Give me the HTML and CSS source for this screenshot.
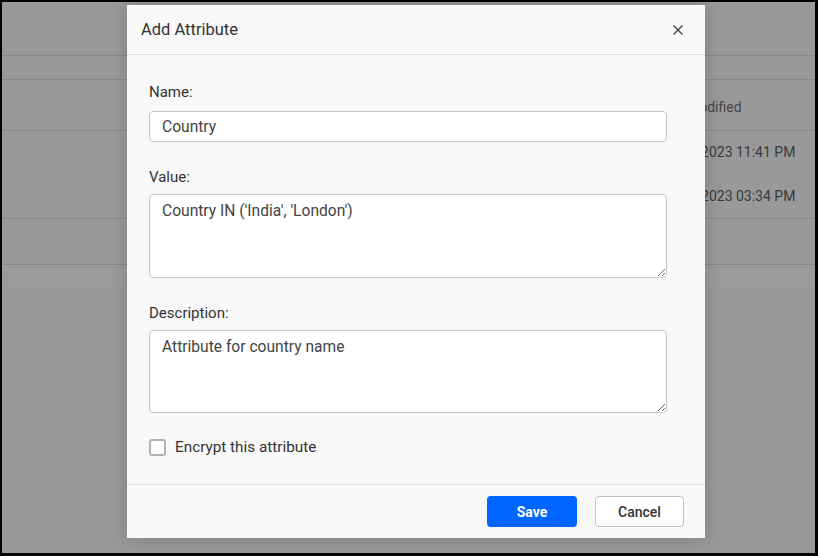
FILE: index.html
```html
<!DOCTYPE html>
<html>
<head>
<meta charset="utf-8">
<link rel="stylesheet" href="styles.css">
</head>
<body>
<div class="frame">
  <div class="page">
    <div class="row row-top"></div>
    <div class="row row-sub"></div>
    <div class="row row-head"><span class="cell">Modified</span></div>
    <div class="rows">
      <div class="row-data"><span class="cell">05/12/2023 11:41 PM</span></div>
      <div class="row-data"><span class="cell">05/12/2023 03:34 PM</span></div>
    </div>
    <div class="row row-foot"></div>
    <div class="row-tail"></div>
  </div>

  <div class="modal">
    <div class="modal-header">
      <span class="modal-title">Add Attribute</span>
      <svg class="close" width="12" height="12" viewBox="0 0 12 12"><path d="M1.5 1.5L10.5 10.5M10.5 1.5L1.5 10.5" stroke="#444" stroke-width="1.4" fill="none"/></svg>
    </div>
    <div class="modal-body">
      <label class="label label-first">Name:</label>
      <input class="input" type="text" value="Country" readonly>
      <label class="label">Value:</label>
      <textarea class="textarea" readonly>Country IN ('India', 'London')</textarea>
      <label class="label">Description:</label>
      <textarea class="textarea textarea-desc" readonly>Attribute for country name</textarea>
      <div class="check-row">
        <span class="checkbox"></span>
        <span class="check-label">Encrypt this attribute</span>
      </div>
    </div>
    <div class="modal-footer">
      <button class="btn btn-save">Save</button>
      <button class="btn btn-cancel">Cancel</button>
    </div>
  </div>
</div>
</body>
</html>
```
FILE: styles.css
```css
* { box-sizing: border-box; }
html, body { margin: 0; padding: 0; }
body {
  width: 818px;
  height: 556px;
  background: #000;
  font-family: Roboto, "Liberation Sans", sans-serif;
  overflow: hidden;
}
.frame {
  position: relative;
  margin: 2px 3px 3px 2px;
  width: 813px;
  height: 551px;
  background: #999;
  overflow: hidden;
}
.page { display: flex; flex-direction: column; }
.row { border-bottom: 1px solid #878787; }
.row-top { height: 54px; }
.row-sub { height: 24px; }
.row-head { height: 51px; padding-top: 17px; }
.cell {
  display: block;
  font-size: 14px;
  line-height: 20px;
  color: #3a3a3a;
  white-space: nowrap;
}
.row-head .cell { color: #454545; padding-left: 685px; }
.rows {
  height: 88px;
  display: flex;
  flex-direction: column;
  gap: 24px;
  padding-top: 11px;
  border-bottom: 1px solid #878787;
}
.row-data .cell { padding-left: 656px; }
.row-foot { height: 46px; }
.row-tail { height: 23px; background: #9b9b9b; }

.modal {
  position: absolute;
  left: 125px;
  top: 3px;
  width: 578px;
  height: 533px;
  background: #f9f9f9;
  display: flex;
  flex-direction: column;
  box-shadow: 0 0 18px rgba(0,0,0,0.18);
}
.modal-header {
  height: 50px;
  border-bottom: 1px solid #e0e0e0;
  display: flex;
  align-items: center;
  justify-content: space-between;
  padding: 0 21px 0 14px;
}
.modal-title {
  font-size: 16.5px;
  color: #333;
}
.close { display: block; }
.modal-body {
  flex: 1;
  display: flex;
  flex-direction: column;
  padding: 27px 38px 0 22px;
}
.label {
  font-size: 15px;
  line-height: 20px;
  color: #333;
  margin-bottom: 7px;
}
.label-first { margin-bottom: 9px; }
.input, .textarea {
  display: block;
  width: 518px;
  border: 1px solid #c6c6c6;
  border-radius: 4px;
  background: #fff;
  font-family: Roboto, "Liberation Sans", sans-serif;
  font-size: 15.6px;
  color: #444;
  outline: none;
}
.input {
  height: 31px;
  padding: 0 12px;
  margin-bottom: 25px;
}
.textarea {
  height: 84px;
  padding: 6px 12px;
  line-height: 20px;
  resize: vertical;
  margin-bottom: 25px;
}
.textarea-desc {
  height: 83px;
  margin-bottom: 24px;
}
.check-row {
  display: flex;
  align-items: center;
  margin-top: 1px;
}
.checkbox {
  width: 17px;
  height: 17px;
  border: 2px solid #b3b3b3;
  border-radius: 3px;
  background: #fff;
  margin-right: 9px;
}
.check-label {
  font-size: 15.3px;
  color: #333;
}
.modal-footer {
  height: 54px;
  border-top: 1px solid #e0e0e0;
  display: flex;
  align-items: center;
  justify-content: flex-end;
  padding: 0 21px 0 0;
  gap: 18px;
}
.btn {
  height: 31px;
  border-radius: 4px;
  font-family: Roboto, "Liberation Sans", sans-serif;
  font-size: 14px;
  cursor: pointer;
}
.btn-save {
  width: 90px;
  background: #0066ff;
  border: none;
  color: #fff;
  font-weight: 700;
}
.btn-cancel {
  width: 89px;
  background: #fff;
  border: 1px solid #c4c4c4;
  color: #333;
  font-weight: 500;
}
```
